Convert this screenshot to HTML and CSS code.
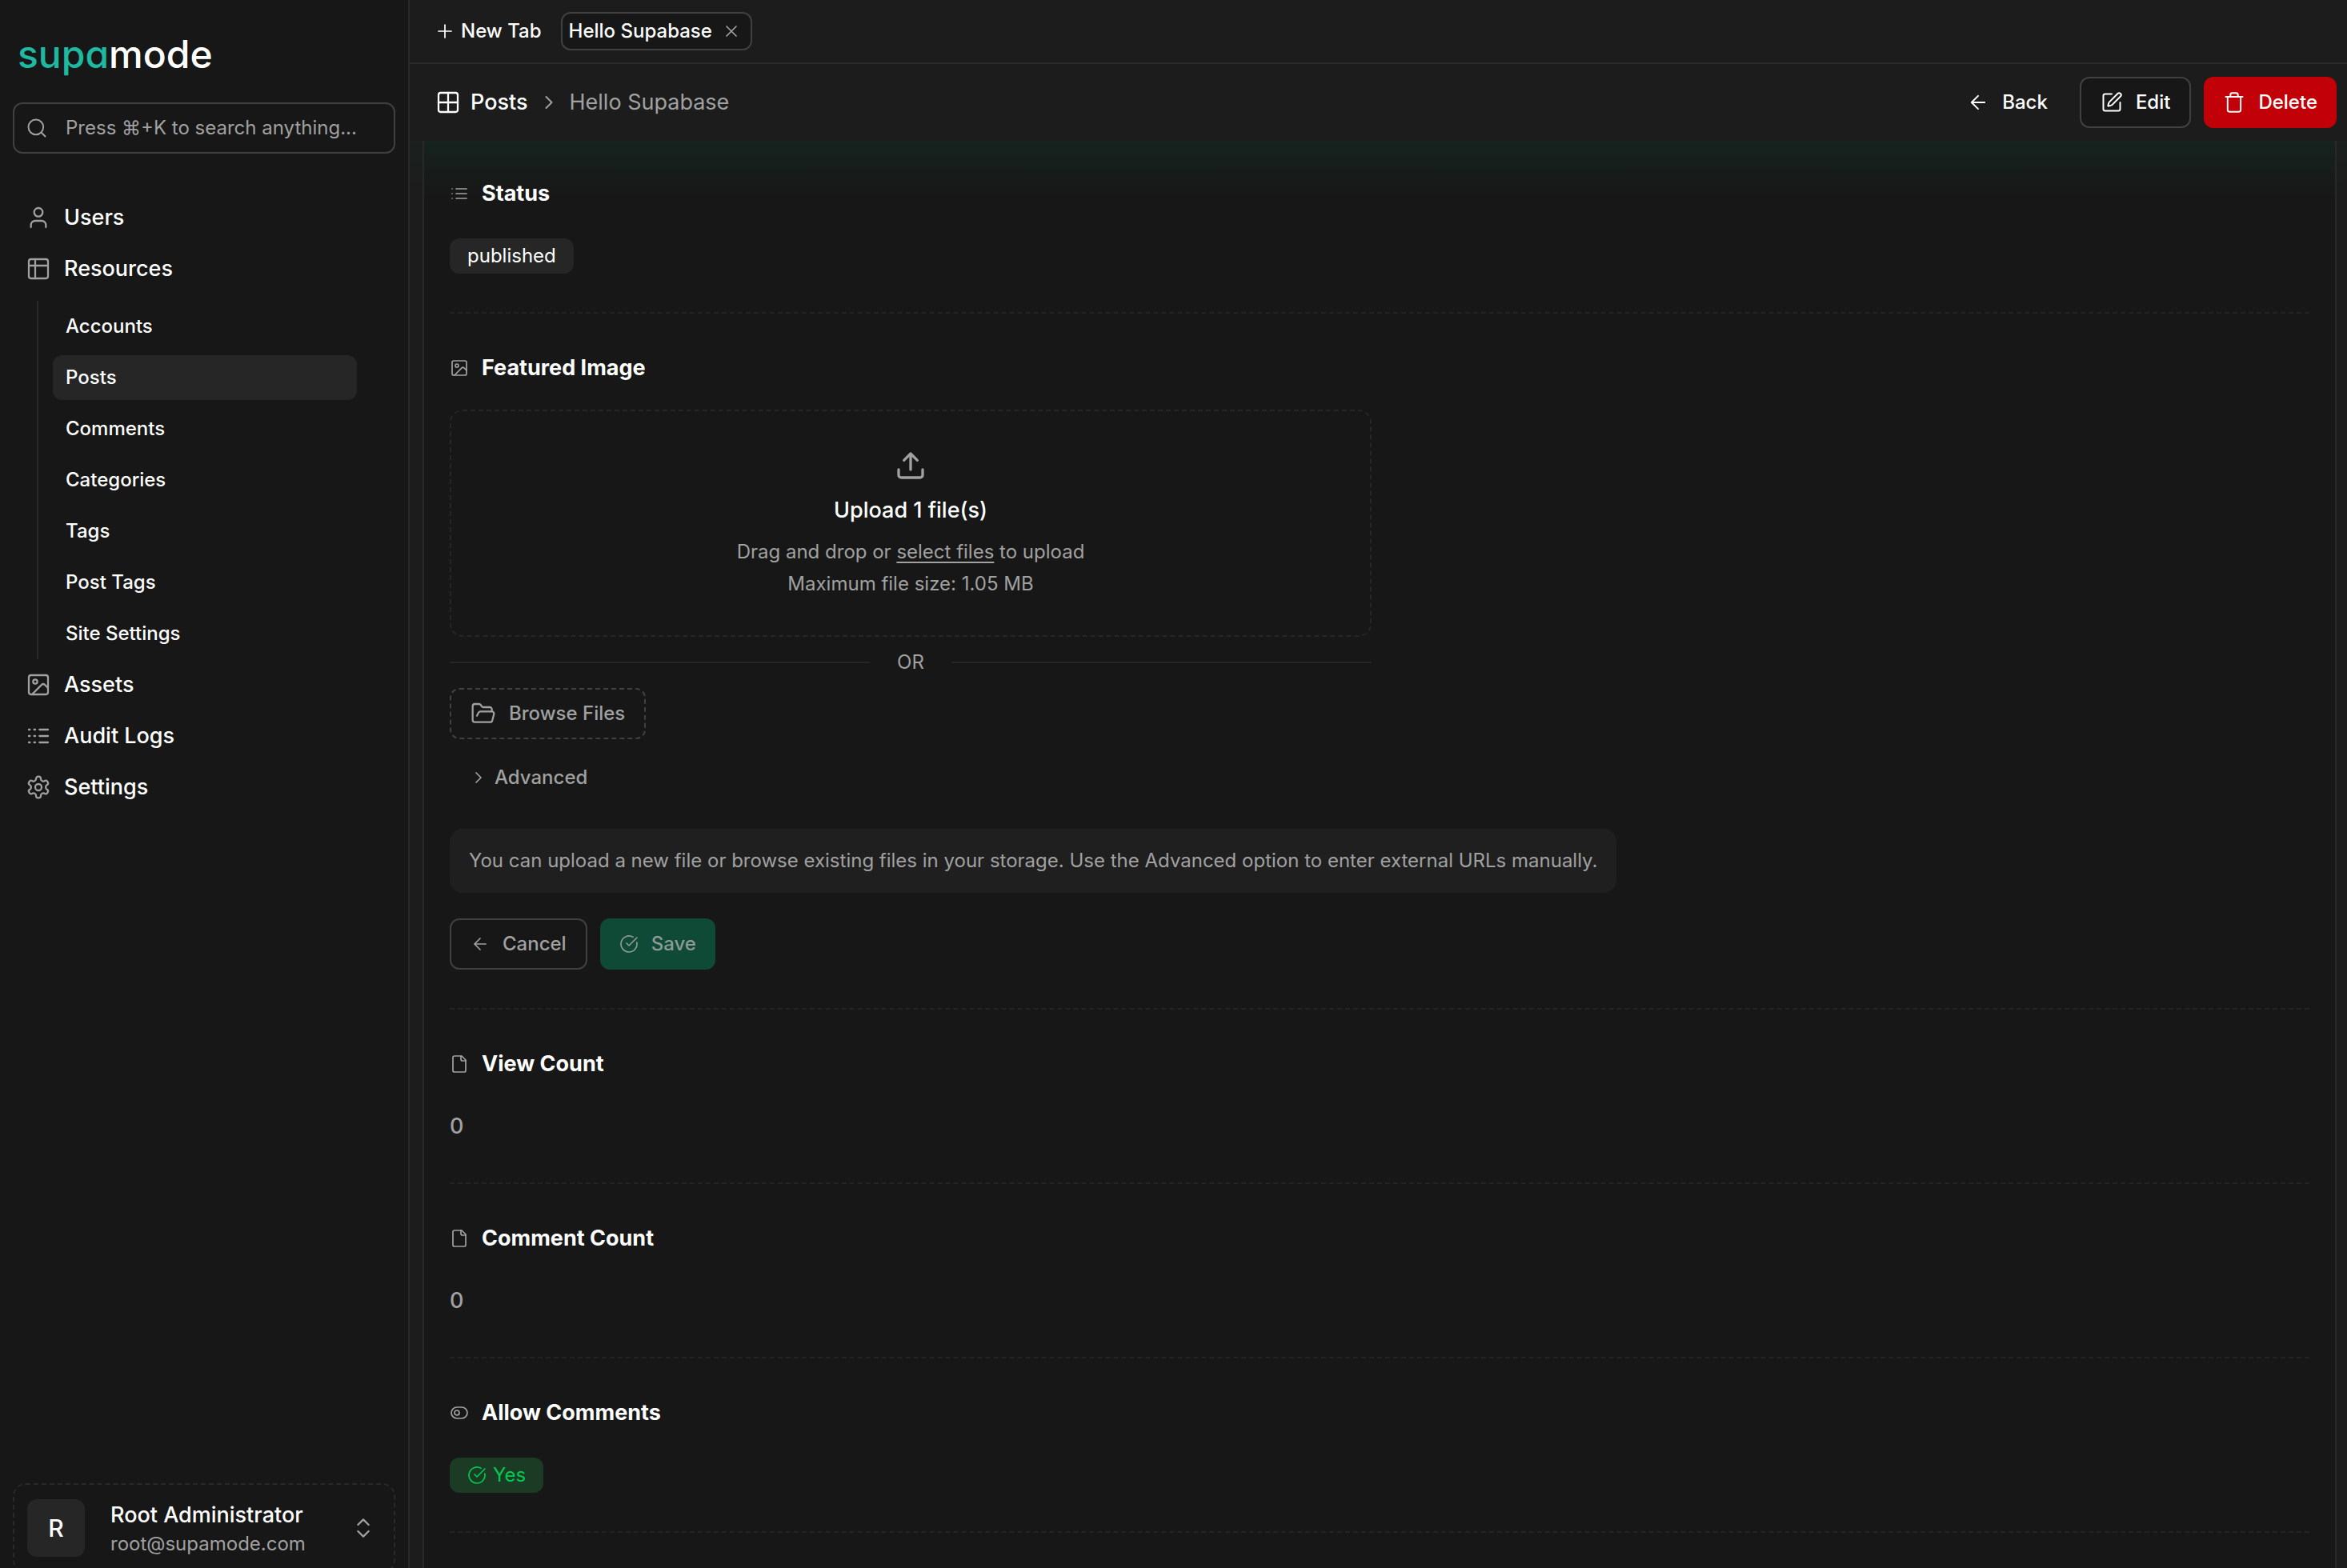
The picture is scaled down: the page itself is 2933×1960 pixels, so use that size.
FILE: index.html
```html
<!DOCTYPE html>
<html lang="en">

<head>
    <meta charset="UTF-8">
    <meta name="viewport" content="width=device-width, initial-scale=1.0">
    <title>Hello Supabase - Supamode</title>
    <link rel="stylesheet" href="styles.css">
</head>

<body>
    <!-- shared icons -->
    <svg class="sprite" aria-hidden="true">
        <symbol id="i-search" viewBox="0 0 24 24"><circle cx="11" cy="11" r="8"/><path d="m21 21-4.3-4.3"/></symbol>
        <symbol id="i-user" viewBox="0 0 24 24"><path d="M19 21v-2a4 4 0 0 0-4-4H9a4 4 0 0 0-4 4v2"/><circle cx="12" cy="7" r="4"/></symbol>
        <symbol id="i-table" viewBox="0 0 24 24"><rect x="3" y="3" width="18" height="18" rx="2"/><path d="M3 9h18M9 3v18"/></symbol>
        <symbol id="i-image" viewBox="0 0 24 24"><rect x="3" y="3" width="18" height="18" rx="2"/><circle cx="9" cy="9" r="2"/><path d="m21 15-3.086-3.086a2 2 0 0 0-2.828 0L6 21"/></symbol>
        <symbol id="i-logs" viewBox="0 0 24 24"><path d="M13 12h8M13 18h8M13 6h8M3 12h1M3 18h1M3 6h1M8 12h1M8 18h1M8 6h1"/></symbol>
        <symbol id="i-settings" viewBox="0 0 24 24"><path d="M12.22 2h-.44a2 2 0 0 0-2 2v.18a2 2 0 0 1-1 1.73l-.43.25a2 2 0 0 1-2 0l-.15-.08a2 2 0 0 0-2.73.73l-.22.38a2 2 0 0 0 .73 2.73l.15.1a2 2 0 0 1 1 1.72v.51a2 2 0 0 1-1 1.74l-.15.09a2 2 0 0 0-.73 2.73l.22.38a2 2 0 0 0 2.73.73l.15-.08a2 2 0 0 1 2 0l.43.25a2 2 0 0 1 1 1.73V20a2 2 0 0 0 2 2h.44a2 2 0 0 0 2-2v-.18a2 2 0 0 1 1-1.73l.43-.25a2 2 0 0 1 2 0l.15.08a2 2 0 0 0 2.73-.73l.22-.39a2 2 0 0 0-.73-2.73l-.15-.08a2 2 0 0 1-1-1.74v-.5a2 2 0 0 1 1-1.74l.15-.09a2 2 0 0 0 .73-2.73l-.22-.38a2 2 0 0 0-2.73-.73l-.15.08a2 2 0 0 1-2 0l-.43-.25a2 2 0 0 1-1-1.73V4a2 2 0 0 0-2-2z"/><circle cx="12" cy="12" r="3"/></symbol>
        <symbol id="i-updown" viewBox="0 0 24 24"><path d="m7 15 5 5 5-5M7 9l5-5 5 5"/></symbol>
        <symbol id="i-plus" viewBox="0 0 24 24"><path d="M4 12h16M12 4v16"/></symbol>
        <symbol id="i-x" viewBox="0 0 24 24"><path d="M18 6 6 18M6 6l12 12"/></symbol>
        <symbol id="i-grid" viewBox="0 0 24 24"><rect x="3" y="3" width="18" height="18" rx="2"/><path d="M3 12h18M12 3v18"/></symbol>
        <symbol id="i-chevron" viewBox="0 0 24 24"><path d="m9 18 6-6-6-6"/></symbol>
        <symbol id="i-back" viewBox="0 0 24 24"><path d="m12 19-7-7 7-7M19 12H5"/></symbol>
        <symbol id="i-edit" viewBox="0 0 24 24"><path d="M12 3H5a2 2 0 0 0-2 2v14a2 2 0 0 0 2 2h14a2 2 0 0 0 2-2v-7"/><path d="M18.375 2.625a1 1 0 0 1 3 3l-9.013 9.014a2 2 0 0 1-.853.505l-2.873.84a.5.5 0 0 1-.62-.62l.84-2.873a2 2 0 0 1 .506-.852z"/></symbol>
        <symbol id="i-trash" viewBox="0 0 24 24"><path d="M3 6h18M19 6v14a2 2 0 0 1-2 2H7a2 2 0 0 1-2-2V6M8 6V4a2 2 0 0 1 2-2h4a2 2 0 0 1 2 2v2"/></symbol>
        <symbol id="i-list" viewBox="0 0 24 24"><path d="M3 12h.01M3 18h.01M3 6h.01M8 12h13M8 18h13M8 6h13"/></symbol>
        <symbol id="i-upload" viewBox="0 0 24 24"><path d="M21 15v4a2 2 0 0 1-2 2H5a2 2 0 0 1-2-2v-4M17 8l-5-5-5 5M12 3v12"/></symbol>
        <symbol id="i-folder" viewBox="0 0 24 24"><path d="m6 14 1.5-2.9A2 2 0 0 1 9.24 10H20a2 2 0 0 1 1.94 2.5l-1.54 6a2 2 0 0 1-1.95 1.5H4a2 2 0 0 1-2-2V5a2 2 0 0 1 2-2h3.9a2 2 0 0 1 1.69.9l.81 1.2a2 2 0 0 0 1.67.9H18a2 2 0 0 1 2 2v2"/></symbol>
        <symbol id="i-check" viewBox="0 0 24 24"><path d="M21.801 10A10 10 0 1 1 17 3.335"/><path d="m9 11 3 3L22 4"/></symbol>
        <symbol id="i-file" viewBox="0 0 24 24"><path d="M15 2H6a2 2 0 0 0-2 2v16a2 2 0 0 0 2 2h12a2 2 0 0 0 2-2V7Z"/><path d="M14 2v4a2 2 0 0 0 2 2h4"/></symbol>
        <symbol id="i-toggle" viewBox="0 0 24 24"><rect x="2" y="5" width="20" height="14" rx="7"/><circle cx="9" cy="12" r="3"/></symbol>
    </svg>

    <div class="app">
        <aside class="sidebar">
            <a href="#" class="logo"><span>supa</span>mode</a>

            <label class="search">
                <svg class="icon icon-md"><use href="#i-search"/></svg>
                <input type="text" placeholder="Press ⌘+K to search anything..." aria-label="Search">
            </label>

            <nav class="nav">
                <a href="#" class="nav-item"><svg class="icon"><use href="#i-user"/></svg>Users</a>
                <a href="#" class="nav-item"><svg class="icon"><use href="#i-table"/></svg>Resources</a>
                <ul class="subnav">
                    <li><a href="#">Accounts</a></li>
                    <li><a href="#" class="active">Posts</a></li>
                    <li><a href="#">Comments</a></li>
                    <li><a href="#">Categories</a></li>
                    <li><a href="#">Tags</a></li>
                    <li><a href="#">Post Tags</a></li>
                    <li><a href="#">Site Settings</a></li>
                </ul>
                <a href="#" class="nav-item"><svg class="icon"><use href="#i-image"/></svg>Assets</a>
                <a href="#" class="nav-item"><svg class="icon"><use href="#i-logs"/></svg>Audit Logs</a>
                <a href="#" class="nav-item"><svg class="icon"><use href="#i-settings"/></svg>Settings</a>
            </nav>

            <button type="button" class="account">
                <span class="avatar">R</span>
                <span class="account-text">
                    <span class="account-name">Root Administrator</span>
                    <span class="account-mail">root@supamode.com</span>
                </span>
                <svg class="icon"><use href="#i-updown"/></svg>
            </button>
        </aside>

        <main class="main">
            <div class="tabs">
                <button type="button" class="new-tab"><svg class="icon icon-sm"><use href="#i-plus"/></svg>New Tab</button>
                <div class="tab">
                    <a href="#">Hello Supabase</a>
                    <button type="button" aria-label="Close tab"><svg class="icon icon-sm"><use href="#i-x"/></svg></button>
                </div>
            </div>

            <header class="header">
                <div class="crumbs">
                    <a href="#"><svg class="icon"><use href="#i-grid"/></svg>Posts</a>
                    <svg class="icon icon-md"><use href="#i-chevron"/></svg>
                    <span>Hello Supabase</span>
                </div>
                <div class="actions">
                    <button type="button" class="btn"><svg class="icon icon-md"><use href="#i-back"/></svg>Back</button>
                    <button type="button" class="btn btn-outline"><svg class="icon icon-md"><use href="#i-edit"/></svg>Edit</button>
                    <button type="button" class="btn btn-danger"><svg class="icon icon-md"><use href="#i-trash"/></svg>Delete</button>
                </div>
            </header>

            <div class="content">
                <div class="card">
                    <section class="field">
                        <h2><svg class="icon icon-sm"><use href="#i-list"/></svg>Status</h2>
                        <div class="value"><span class="badge">published</span></div>
                    </section>

                    <section class="field">
                        <h2><svg class="icon icon-sm"><use href="#i-image"/></svg>Featured Image</h2>
                        <div class="upload">
                            <div class="dropzone">
                                <svg class="icon icon-lg"><use href="#i-upload"/></svg>
                                <p class="dropzone-title">Upload 1 file(s)</p>
                                <p>Drag and drop or <a href="#">select files</a> to upload</p>
                                <p>Maximum file size: 1.05 MB</p>
                            </div>
                            <div class="or">OR</div>
                            <button type="button" class="btn btn-outline btn-dashed"><svg class="icon"><use href="#i-folder"/></svg>Browse Files</button>
                            <button type="button" class="btn advanced"><svg class="icon icon-sm"><use href="#i-chevron"/></svg>Advanced</button>
                        </div>
                        <p class="hint">You can upload a new file or browse existing files in your storage. Use the Advanced option to enter external URLs manually.</p>
                        <div class="form-actions">
                            <button type="button" class="btn btn-outline muted"><svg class="icon icon-sm"><use href="#i-back"/></svg>Cancel</button>
                            <button type="button" class="btn btn-save" disabled><svg class="icon icon-sm"><use href="#i-check"/></svg>Save</button>
                        </div>
                    </section>

                    <section class="field">
                        <h2><svg class="icon icon-sm"><use href="#i-file"/></svg>View Count</h2>
                        <div class="value">0</div>
                    </section>

                    <section class="field">
                        <h2><svg class="icon icon-sm"><use href="#i-file"/></svg>Comment Count</h2>
                        <div class="value">0</div>
                    </section>

                    <section class="field">
                        <h2><svg class="icon icon-sm"><use href="#i-toggle"/></svg>Allow Comments</h2>
                        <div class="value"><span class="badge badge-yes"><svg class="icon icon-sm"><use href="#i-check"/></svg>Yes</span></div>
                    </section>
                </div>
            </div>
        </main>
    </div>
</body>

</html>
```
FILE: styles.css
```css
:root {
    --bg: #171717;
    --bg-main: #1c1c1c;
    --line: #292929;
    --line-strong: #404040;
    --accent: #262626;
    --text: #fff;
    --muted: #a1a1a1;
}

* {
    margin: 0;
    padding: 0;
    box-sizing: border-box;
}

body {
    background: var(--bg);
    color: var(--text);
    font-family: Inter, "Liberation Sans", sans-serif;
    font-size: 24px;
    line-height: 40px;
    overflow: hidden;
}

a {
    color: inherit;
    text-decoration: none;
}

ul {
    list-style: none;
}

button {
    font: inherit;
    color: inherit;
    background: none;
    border: 0;
    cursor: pointer;
}

.sprite {
    display: none;
}

.icon {
    width: 32px;
    height: 32px;
    flex: none;
    fill: none;
    stroke: currentColor;
    stroke-width: 1.7;
    stroke-linecap: round;
    stroke-linejoin: round;
}

.icon-sm {
    width: 24px;
    height: 24px;
}

.icon-md {
    width: 28px;
    height: 28px;
}

.icon-lg {
    width: 40px;
    height: 40px;
    stroke-width: 2;
}

.app {
    display: flex;
    height: 100vh;
}

/* sidebar */
.sidebar {
    width: 512px;
    flex: none;
    display: flex;
    flex-direction: column;
    padding: 36px 16px 0;
    border-right: 2px solid var(--line);
    overflow: hidden;
}

.logo {
    padding-left: 6px;
    font-size: 48px;
    font-weight: 500;
    line-height: 64px;
    font-feature-settings: "cv11";
}

.logo span {
    color: #1fb8a0;
}

.search {
    display: flex;
    align-items: center;
    gap: 22px;
    height: 64px;
    margin-top: 28px;
    padding: 0 14px;
    border: 2px solid var(--line-strong);
    border-radius: 12px;
    color: var(--muted);
}

.search input {
    flex: 1;
    min-width: 0;
    font: inherit;
    color: inherit;
    background: none;
    border: 0;
    outline: 0;
}

.search input::placeholder {
    color: var(--muted);
    opacity: 1;
}

.nav {
    flex: 1;
    margin-top: 48px;
    font-weight: 500;
}

.nav-item {
    display: flex;
    align-items: center;
    gap: 16px;
    height: 64px;
    padding: 0 16px;
    font-size: 27px;
}

.nav-item .icon {
    color: var(--muted);
}

.subnav {
    display: flex;
    flex-direction: column;
    gap: 8px;
    margin: 8px 48px 0 30px;
    padding: 4px 0 4px 18px;
    border-left: 2px solid var(--line);
}

.subnav a {
    display: block;
    padding: 8px 16px;
    border-radius: 12px;
}

.subnav a.active {
    background: var(--accent);
}

.account {
    display: flex;
    align-items: center;
    gap: 32px;
    margin-bottom: -6px;
    padding: 16px 22px 16px 16px;
    border: 2px dashed var(--line);
    border-radius: 16px;
    text-align: left;
}

.avatar {
    display: grid;
    place-items: center;
    width: 72px;
    height: 72px;
    border-radius: 12px;
    background: var(--accent);
    font-size: 30px;
    font-weight: 500;
}

.account-text {
    flex: 1;
    display: grid;
    padding-top: 4px;
    line-height: 36px;
}

.account-name {
    font-size: 27px;
    font-weight: 500;
}

.account-mail,
.account .icon {
    color: var(--muted);
}

/* main column */
.main {
    flex: 1;
    min-width: 0;
    display: flex;
    flex-direction: column;
    background: var(--bg-main);
}

.tabs {
    display: flex;
    align-items: center;
    gap: 24px;
    height: 80px;
    padding-left: 32px;
    border-bottom: 2px solid var(--line);
    font-weight: 500;
}

.new-tab {
    display: flex;
    align-items: center;
    gap: 8px;
}

.tab {
    display: flex;
    align-items: center;
    gap: 12px;
    height: 48px;
    padding: 0 12px 0 8px;
    border: 2px solid var(--line-strong);
    border-radius: 12px;
    background: var(--bg);
}

.tab button {
    display: flex;
    color: var(--muted);
}

.header {
    display: flex;
    align-items: center;
    justify-content: space-between;
    padding: 16px 13px 16px 32px;
}

.crumbs {
    display: flex;
    align-items: center;
    gap: 12px;
    font-size: 27px;
    color: var(--muted);
}

.crumbs a {
    display: flex;
    align-items: center;
    gap: 12px;
    color: var(--text);
    font-weight: 500;
}

.actions {
    display: flex;
    gap: 16px;
}

.btn {
    display: flex;
    align-items: center;
    gap: 16px;
    height: 64px;
    padding: 0 24px;
    border-radius: 12px;
    font-weight: 500;
}

.btn-outline {
    border: 2px solid var(--line-strong);
    background: var(--bg);
}

.btn-danger {
    background: #c10007;
}

.content {
    flex: 1;
    min-height: 0;
    padding: 0 13px 0 16px;
    background: linear-gradient(#1a211f, var(--bg-main) 56px);
    overflow: hidden;
}

.card {
    min-height: 100%;
    padding: 0 32px;
    border: solid var(--line);
    border-width: 0 2px;
    background: linear-gradient(#16231f, #171c1a 40px, var(--bg) 72px);
}

.field {
    padding: 50px 0 48px;
    border-bottom: 2px dashed #232323;
}

.field:first-child {
    padding-top: 48px;
}

.field h2 {
    display: flex;
    align-items: center;
    gap: 16px;
    font-size: 27px;
    font-weight: 700;
    line-height: 36px;
}

.field h2 .icon {
    color: var(--muted);
}

.value {
    display: flex;
    align-items: center;
    height: 44px;
    margin-top: 38px;
    font-size: 27px;
    font-weight: 500;
    color: var(--muted);
}

.badge {
    display: flex;
    align-items: center;
    gap: 8px;
    height: 44px;
    padding: 0 22px;
    border-radius: 12px;
    background: var(--accent);
    color: var(--text);
    font-size: 24px;
    font-weight: 400;
}

.badge-yes {
    background: #1b3b25;
    color: #00c951;
}

/* image upload */
.upload {
    display: flex;
    flex-direction: column;
    align-items: flex-start;
    gap: 16px;
    max-width: 1152px;
    margin-top: 34px;
    color: var(--muted);
}

.dropzone {
    width: 100%;
    padding: 48px 24px 44px;
    border: 2px dashed #262626;
    border-radius: 16px;
    text-align: center;
}

.dropzone .icon {
    display: block;
    margin: 0 auto;
}

.dropzone-title {
    margin: 16px 0 12px;
    font-size: 27px;
    font-weight: 500;
    color: var(--text);
}

.dropzone a {
    text-decoration: underline;
    text-underline-offset: 4px;
}

.or {
    display: flex;
    align-items: center;
    gap: 34px;
    width: 100%;
    line-height: 32px;
}

.or::before,
.or::after {
    content: "";
    flex: 1;
    height: 2px;
    background: #262626;
}

.btn-dashed {
    border-style: dashed;
}

.advanced {
    gap: 8px;
}

.hint {
    width: fit-content;
    margin-top: 32px;
    padding: 20px 24px;
    border-radius: 16px;
    background: #1f1f1f;
    color: var(--muted);
}

.form-actions {
    display: flex;
    gap: 16px;
    margin-top: 32px;
}

.muted {
    color: var(--muted);
}

.btn-save {
    background: #0f4a37;
    color: #8d9a95;
}
```
